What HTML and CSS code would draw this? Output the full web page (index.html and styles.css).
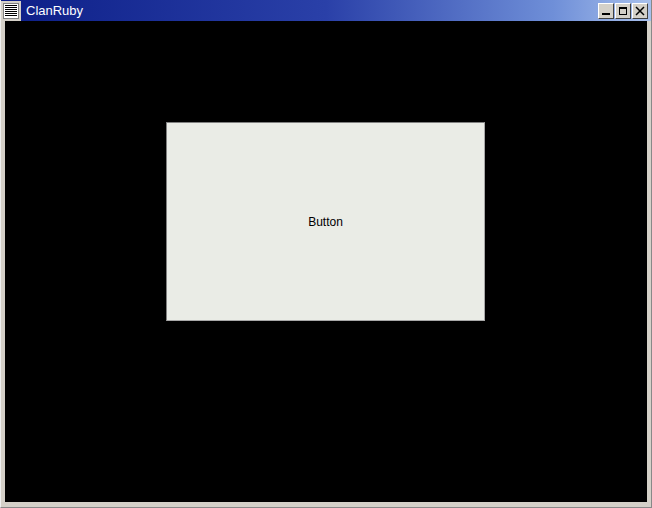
FILE: index.html
```html
<!DOCTYPE html>
<html lang="en">
<head>
    <meta charset="UTF-8">
    <link rel="stylesheet" href="styles.css">
    <title>ClanRuby</title>
</head>
<body>
<div class="window">
    <div class="titlebar">
        <div class="menu-btn">
            <svg width="16" height="16" viewBox="0 0 16 16">
                <rect x="0.5" y="0.5" width="15" height="15" fill="#fff" stroke="#808080"/>
                <path d="M2 2.5h12M2 4.5h12M2 6.5h12M2 8.5h12M2 10.5h12M2 12.5h12" stroke="#000" stroke-width="1"/>
            </svg>
        </div>
        <span class="title">ClanRuby</span>
        <div class="controls">
            <button class="ctl">
                <svg width="10" height="10" viewBox="0 0 10 10"><rect x="1" y="7" width="8" height="2" fill="#000"/></svg>
            </button>
            <button class="ctl">
                <svg width="10" height="10" viewBox="0 0 10 10"><rect x="1.5" y="1.5" width="7" height="7" fill="none" stroke="#000"/><rect x="1" y="1" width="8" height="2" fill="#000"/></svg>
            </button>
            <button class="ctl">
                <svg width="10" height="10" viewBox="0 0 10 10"><path d="M1 1L9 9M9 1L1 9" stroke="#000" stroke-width="1.5"/></svg>
            </button>
        </div>
    </div>
    <div class="client">
        <div class="button">Button</div>
    </div>
</div>
</body>
</html>
```

FILE: styles.css
```css
body, html {
    margin: 0;
    padding: 0;
    width: 652px;
    height: 508px;
    overflow: hidden;
}

.window {
    box-sizing: border-box;
    width: 652px;
    height: 508px;
    background: #d4d0c8;
    padding: 0 4px 5px 4px;
    display: flex;
    flex-direction: column;
    border-left: 1px solid #f0f0f0;
    border-right: 1px solid #888;
    border-bottom: 1px solid #888;
}

.titlebar {
    height: 21px;
    margin: 0 -4px;
    display: flex;
    align-items: center;
    background: linear-gradient(to right, #0d1f88 0%, #2a40a8 50%, #6f8fd8 85%, #a8c0ec 100%);
    font-family: "Liberation Sans", Arial, sans-serif;
    font-size: 13px;
    color: #fff;
}

.menu-btn {
    width: 20px;
    height: 20px;
    display: flex;
    align-items: center;
    justify-content: center;
    background: #d4d0c8;
}

.title {
    margin-left: 5px;
    flex: 1;
}

.controls {
    display: flex;
    padding-right: 3px;
    gap: 1px;
}

.ctl {
    box-sizing: border-box;
    width: 16px;
    height: 16px;
    padding: 0;
    display: flex;
    align-items: center;
    justify-content: center;
    background: #d4d0c8;
    border: 1px solid;
    border-color: #fff #404040 #404040 #fff;
}

.client {
    flex: 1;
    background: #000;
    display: flex;
    justify-content: center;
    padding-top: 101px;
}

.button {
    box-sizing: border-box;
    width: 319px;
    height: 199px;
    margin-left: -1px;
    background: #eaece6;
    border: 1px solid;
    border-color: #808080 #a8a8a8 #a8a8a8 #808080;
    display: flex;
    align-items: center;
    justify-content: center;
    font-family: "Liberation Sans", Arial, sans-serif;
    font-size: 12px;
    color: #000;
}
```
